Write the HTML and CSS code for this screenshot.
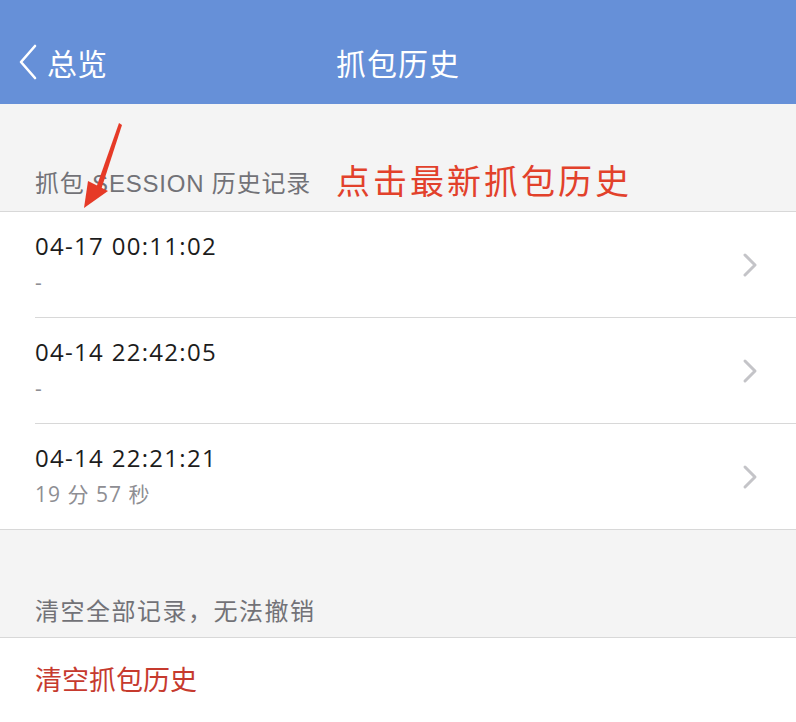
FILE: index.html
```html
<!DOCTYPE html>
<html lang="zh-CN">
<head>
<meta charset="utf-8">
<title>抓包历史</title>
<link rel="stylesheet" href="styles.css">
</head>
<body>
<div class="screen">
  <header class="navbar">
    <div class="nav-back">
      <svg class="back-icon" width="20" height="36" viewBox="0 0 20 36"><path d="M17 2 L3 18 L17 34" fill="none" stroke="#fff" stroke-width="2.6" stroke-linecap="round" stroke-linejoin="round"/></svg>
      <span>总览</span>
    </div>
    <div class="nav-title">抓包历史</div>
  </header>

  <div class="section-head">
    <span class="section-label">抓包 SESSION 历史记录</span>
    <span class="annotation">点击最新抓包历史</span>
  </div>

  <ul class="list">
    <li class="row">
      <div class="row-text">
        <div class="row-title">04-17 00:11:02</div>
        <div class="row-sub">-</div>
      </div>
      <svg class="chev" width="16" height="26" viewBox="0 0 16 26"><path d="M3 3 L13 13 L3 23" fill="none" stroke="#c4c4c8" stroke-width="3" stroke-linecap="round" stroke-linejoin="round"/></svg>
    </li>
    <li class="row">
      <div class="row-text">
        <div class="row-title">04-14 22:42:05</div>
        <div class="row-sub">-</div>
      </div>
      <svg class="chev" width="16" height="26" viewBox="0 0 16 26"><path d="M3 3 L13 13 L3 23" fill="none" stroke="#c4c4c8" stroke-width="3" stroke-linecap="round" stroke-linejoin="round"/></svg>
    </li>
    <li class="row">
      <div class="row-text">
        <div class="row-title">04-14 22:21:21</div>
        <div class="row-sub">19 分 57 秒</div>
      </div>
      <svg class="chev" width="16" height="26" viewBox="0 0 16 26"><path d="M3 3 L13 13 L3 23" fill="none" stroke="#c4c4c8" stroke-width="3" stroke-linecap="round" stroke-linejoin="round"/></svg>
    </li>
  </ul>

  <div class="section-head section-head-2">
    <span class="section-label">清空全部记录，无法撤销</span>
  </div>

  <div class="list">
    <div class="danger-row">清空抓包历史</div>
  </div>

  <svg class="pointer" width="60" height="100" viewBox="0 0 60 100">
    <path d="M49 2 L52 4 L30 72 L25 70 Z" fill="#e63a27"/>
    <path d="M14 87 L18 60 L38 70 Z" fill="#e63a27"/>
  </svg>
</div>
</body>
</html>
```

FILE: styles.css
```css
* { box-sizing: border-box; }
html, body { margin: 0; padding: 0; }
body {
  background: #f4f4f4;
  font-family: "Noto Sans", "Noto Sans CJK SC", sans-serif;
}
.screen {
  position: relative;
  width: 796px;
  height: 722px;
  overflow: hidden;
  background: #f4f4f4;
}
.navbar {
  position: relative;
  height: 104px;
  background: #6690d8;
  display: flex;
  align-items: center;
  padding: 20px 0 0 18px;
  color: #fff;
}
.nav-back {
  display: flex;
  align-items: center;
  gap: 9px;
  font-family: "Noto Sans CJK SC", sans-serif;
  font-size: 30px;
  line-height: 36px;
}
.back-icon { display: block; }
.nav-title {
  position: absolute;
  left: 0;
  right: 0;
  top: 20px;
  bottom: 0;
  display: flex;
  align-items: center;
  justify-content: center;
  font-family: "Noto Sans CJK SC", sans-serif;
  font-size: 30px;
  letter-spacing: 1px;
  pointer-events: none;
}
.section-head {
  height: 108px;
  display: flex;
  align-items: flex-end;
  padding: 0 0 12px 35px;
  gap: 25px;
  border-bottom: 1px solid #d8d8d8;
}
.section-label {
  font-family: "Liberation Sans", "Noto Sans CJK SC", sans-serif;
  font-size: 24px;
  color: #727277;
  line-height: 30px;
  letter-spacing: 0.8px;
}
.annotation {
  font-family: "Noto Sans CJK SC", sans-serif;
  font-size: 34px;
  color: #e2412b;
  line-height: 46px;
  letter-spacing: 3px;
  margin-bottom: -4px;
}
.list {
  list-style: none;
  margin: 0;
  padding: 0 0 0 35px;
  background: #fff;
  border-bottom: 1px solid #d8d8d8;
}
.row {
  height: 106px;
  display: flex;
  align-items: center;
  padding-right: 38px;
  border-bottom: 1px solid #d8d8d8;
}
.row:last-child { border-bottom: none; height: 105px; }
.row-text { flex: 1; padding-bottom: 4px; }
.row-title {
  font-family: "Open Sans", sans-serif;
  font-weight: 400;
  font-size: 24px;
  color: #1c1c1c;
  line-height: 34px;
  letter-spacing: 1.3px;
}
.row-sub {
  font-family: "Open Sans", "Noto Sans CJK SC", sans-serif;
  font-size: 21px;
  color: #8e8e93;
  line-height: 30px;
  margin-top: 4px;
  letter-spacing: 1px;
}
.chev { display: block; }
.section-head-2 {
  height: 108px;
  padding-bottom: 10px;
}
.section-head-2 .section-label { letter-spacing: 1.5px; }
.danger-row {
  height: 84px;
  display: flex;
  align-items: center;
  font-family: "Noto Sans CJK SC", sans-serif;
  font-size: 27px;
  color: #c63a2e;
  padding-bottom: 4px;
}
.pointer {
  position: absolute;
  left: 70px;
  top: 121px;
}
```
